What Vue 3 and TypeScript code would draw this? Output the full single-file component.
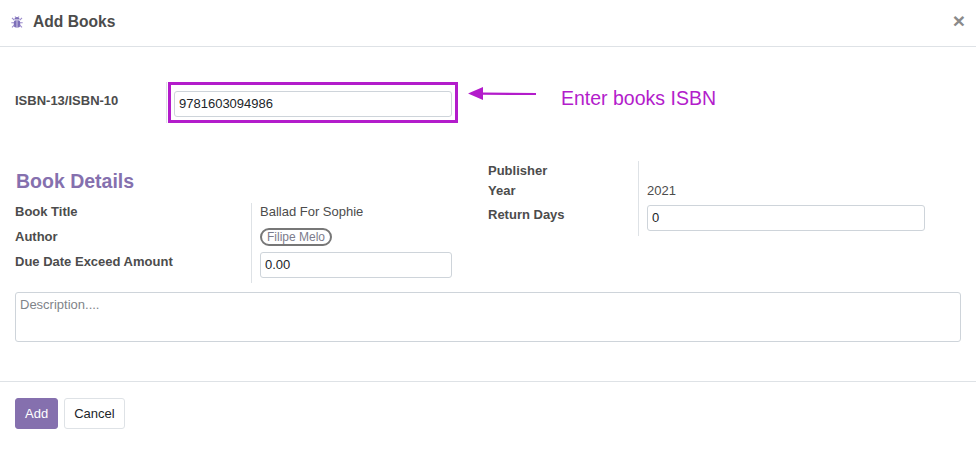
<script setup lang="ts">
const leftRows = [
  { label: 'Book Title', value: 'Ballad For Sophie' },
];
</script>

<template>
  <div class="dialog">
    <header class="head">
      <svg class="bug" viewBox="0 0 12 12" width="12" height="12" aria-hidden="true">
        <path d="M3.4 3.6A2.6 2.6 0 0 1 8.6 3.6Z" fill="#7d6fb8" />
        <rect x="2.8" y="4.2" width="6.4" height="7.2" rx="2" fill="#7d6fb8" />
        <path d="M6 4.2V11.4" stroke="#e4dff2" stroke-width=".8" />
        <path d="M1 1.8 3.2 4.2M11 1.8 8.8 4.2M.3 6.8H3M11.7 6.8H9M1 11.4 3.2 9.2M11 11.4 8.8 9.2M4 .5 4.8 1.6M8 .5 7.2 1.6" stroke="#9c8ccc" stroke-width="1.1" fill="none" />
      </svg>
      <h1 class="title">Add Books</h1>
      <span class="close">×</span>
    </header>

    <main class="body">
      <div class="isbn">
        <label class="lab isbn-lab">ISBN-13/ISBN-10</label>
        <div class="isbn-cell">
          <input class="inp isbn-inp" value="9781603094986" />
          <div class="mark"></div>
          <svg class="arrow" width="72" height="16" viewBox="0 0 72 16" aria-hidden="true">
            <path d="M0 8.5 15 2V7.6L68 8V10L15 9.8V15Z" fill="#b31ccb" />
          </svg>
          <span class="note">Enter books ISBN</span>
        </div>
      </div>

      <div class="details">
        <section class="col-left">
          <h2 class="sub">Book Details</h2>
          <div class="grid left-grid">
            <div class="lab l1">{{ leftRows[0].label }}</div>
            <div class="val v1">{{ leftRows[0].value }}</div>
            <div class="lab l2">Author</div>
            <div class="val v2"><span class="tag">Filipe Melo</span></div>
            <div class="lab l3">Due Date Exceed Amount</div>
            <div class="val v3"><input class="inp due" value="0.00" /></div>
          </div>
        </section>
        <section class="col-right">
          <div class="grid right-grid">
            <div class="lab r1">Publisher</div>
            <div class="val r1v"></div>
            <div class="lab r2">Year</div>
            <div class="val r2v">2021</div>
            <div class="lab r3">Return Days</div>
            <div class="val r3v"><input class="inp ret" value="0" /></div>
          </div>
        </section>
      </div>

      <textarea class="desc" placeholder="Description...."></textarea>
    </main>

    <footer class="foot">
      <button class="btn primary">Add</button>
      <button class="btn">Cancel</button>
    </footer>
  </div>
</template>

<style>
html, body { margin: 0; background: #fff; }
</style>

<style scoped>
.dialog {
  width: 976px;
  height: 451px;
  overflow: hidden;
  font-family: "Liberation Sans", Arial, sans-serif;
  font-size: 13px;
  color: #4c4c4c;
  background: #fff;
}
.head {
  box-sizing: border-box;
  height: 47px;
  border-bottom: 1px solid #dee2e6;
  display: flex;
  align-items: center;
  padding: 0 11px 2px;
  position: relative;
}
.bug { flex: none; margin-right: 10px; }
.title {
  margin: 0;
  font-size: 15.6px;
  font-weight: 700;
  color: #4c4c4c;
}
.close {
  margin-left: auto;
  font-size: 21px;
  font-weight: 700;
  line-height: 1;
  color: #8a8a8a;
  margin-top: -3px;
}
.body { padding: 35px 15px 0; }
.lab { font-weight: 700; color: #4c4c4c; line-height: 15px; }
.isbn {
  display: flex;
  height: 41px;
}
.isbn-lab { width: 151px; flex: none; padding-top: 11px; }
.isbn-cell {
  border-left: 1px solid #dee2e6;
  position: relative;
  flex: 1;
  padding: 9px 0 0 7px;
}
.inp {
  display: block;
  box-sizing: border-box;
  height: 26px;
  border: 1px solid #ced4da;
  border-radius: 3px;
  padding: 0 3px 1px 4px;
  font: 13px "Liberation Sans", Arial, sans-serif;
  color: #212529;
  background: #fff;
  outline: none;
}
.isbn-inp { width: 278px; }
.mark {
  position: absolute;
  left: 1px;
  top: 0;
  width: 290px;
  height: 41px;
  box-sizing: border-box;
  border: 3px solid #b31ccb;
}
.arrow { position: absolute; left: 301px; top: 3px; }
.note {
  position: absolute;
  left: 394px;
  top: 4px;
  font-size: 19.5px;
  line-height: 24px;
  color: #b31ccb;
  white-space: nowrap;
}
.details {
  display: flex;
  margin-top: 38px;
  height: 121px;
}
.col-left { width: 473px; flex: none; }
.sub {
  margin: 8px 0 0 1px;
  font-size: 19.5px;
  line-height: 24px;
  font-weight: 700;
  color: #8570ae;
}
.grid { display: grid; }
.left-grid {
  margin-top: 10px;
  grid-template-columns: 236px 1fr;
  grid-template-rows: 25px 24px 31px;
}
.left-grid .val {
  border-left: 1px solid #dee2e6;
  padding-left: 8px;
}
.left-grid .lab { padding-top: 1px; }
.left-grid .l3 { padding-top: 2px; }
.v1 { padding-top: 1px; }
.val { color: #4c4c4c; line-height: 15px; }
.tag {
  display: inline-block;
  box-sizing: border-box;
  height: 18px;
  line-height: 14px;
  padding: 0 5px;
  font-size: 12px;
  color: #7c7c8c;
  border: 2px solid #777;
  border-radius: 9px;
}
.due { width: 192px; margin-top: 0; }
.col-right { flex: 1; }
.right-grid {
  grid-template-columns: 150px 1fr;
  grid-template-rows: 20px 24px 31px;
}
.right-grid .val { border-left: 1px solid #dee2e6; padding-left: 8px; }
.right-grid .lab { padding-top: 2px; }
.r2v { padding-top: 2px; }
.ret { width: 278px; }
.desc {
  display: block;
  box-sizing: border-box;
  width: 946px;
  height: 50px;
  margin-top: 10px;
  border: 1px solid #ced4da;
  border-radius: 3px;
  padding: 4px;
  font: 13px "Liberation Sans", Arial, sans-serif;
  resize: none;
  outline: none;
}
.desc::placeholder { color: #7f8489; opacity: 1; }
.foot {
  margin-top: 39px;
  border-top: 1px solid #dee2e6;
  padding: 16px 15px 0;
  display: flex;
  gap: 6px;
}
.btn {
  box-sizing: border-box;
  height: 31px;
  padding: 0 9px;
  border: 1px solid #dee2e6;
  border-radius: 3px;
  background: #fff;
  color: #212529;
  font: 13px "Liberation Sans", Arial, sans-serif;
}
.primary {
  background: #8570ae;
  border-color: #8570ae;
  color: #fff;
}
</style>
